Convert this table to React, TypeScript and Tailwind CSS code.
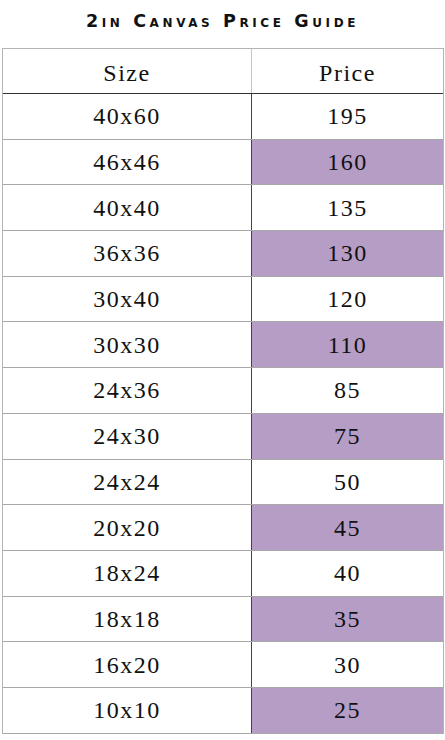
import React from "react";

const rows: { size: string; price: string }[] = [
  { size: "40x60", price: "195" },
  { size: "46x46", price: "160" },
  { size: "40x40", price: "135" },
  { size: "36x36", price: "130" },
  { size: "30x40", price: "120" },
  { size: "30x30", price: "110" },
  { size: "24x36", price: "85" },
  { size: "24x30", price: "75" },
  { size: "24x24", price: "50" },
  { size: "20x20", price: "45" },
  { size: "18x24", price: "40" },
  { size: "18x18", price: "35" },
  { size: "16x20", price: "30" },
  { size: "10x10", price: "25" },
];

export default function App() {
  return (
    <div className="w-[445px] h-[740px] bg-white overflow-hidden text-[#111]">
      <div className="h-[48px] pt-[10px] text-center">
        <h1 className="font-['DejaVu_Sans'] text-[17.5px] leading-[22px] font-bold tracking-[3.6px] [font-variant-caps:small-caps]">
          2in Canvas Price Guide
        </h1>
      </div>

      <div className="font-['Liberation_Serif'] text-[24px] tracking-[1.5px] ml-[2px] w-[442px] border-x border-t border-[#b4b4b4]">
        {/* header */}
        <div className="grid grid-cols-[249px_1fr] h-[45px] border-b border-[#333]">
          <div className="flex items-center justify-center pt-[4px] border-r border-[#c4c4c4]">Size</div>
          <div className="flex items-center justify-center pt-[4px]">Price</div>
        </div>

        {rows.map((row, i) => (
          <div
            key={row.size}
            className="grid grid-cols-[249px_1fr] h-[45.7px] border-b border-[#a8a8a8]"
          >
            <div className="flex items-center justify-center border-r border-[#444]">
              {row.size}
            </div>
            <div
              className={`flex items-center justify-center ${
                i % 2 === 1 ? "bg-[#b59dc6]" : "bg-white"
              }`}
            >
              {row.price}
            </div>
          </div>
        ))}
      </div>
    </div>
  );
}
